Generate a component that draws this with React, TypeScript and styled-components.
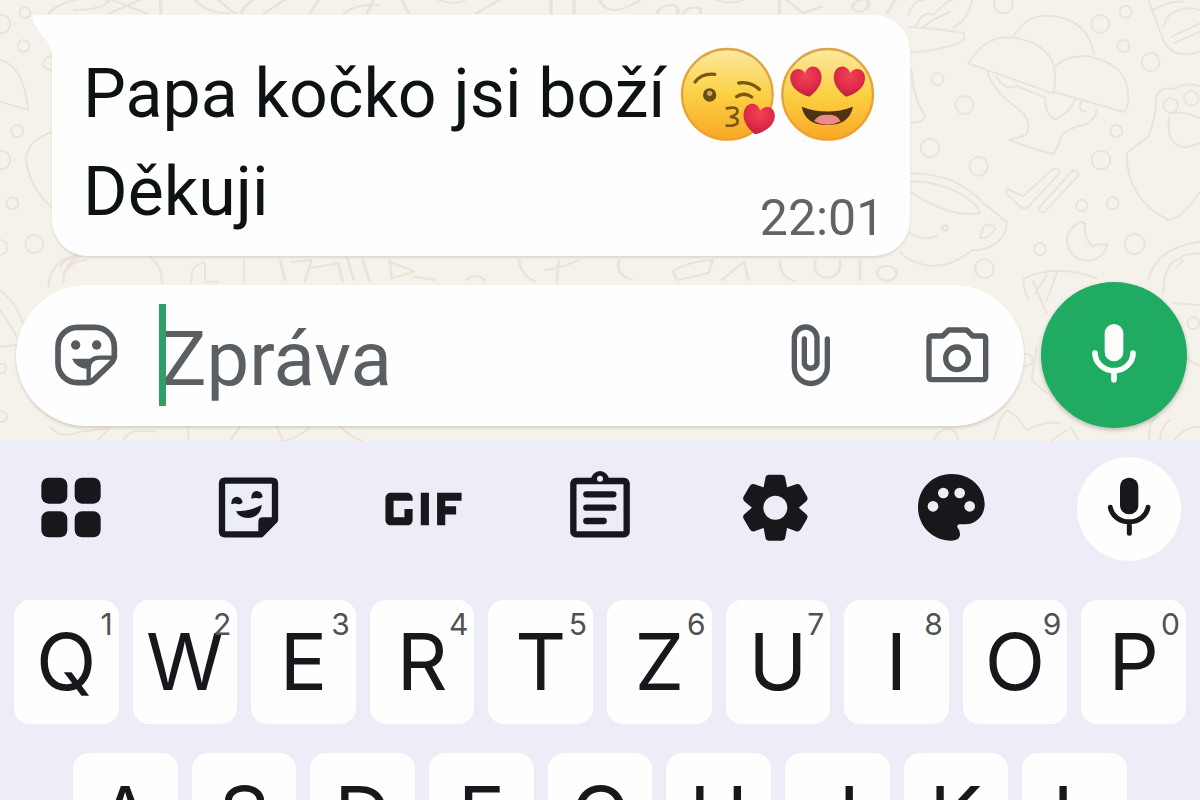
import React from "react";
import styled, { createGlobalStyle } from "styled-components";
import { MdGif } from "react-icons/md";

const GlobalStyle = createGlobalStyle`
  *, *::before, *::after { box-sizing: border-box; }
  body { margin: 0; font-family: Roboto, "Liberation Sans", sans-serif; }
  button { border: 0; padding: 0; background: none; font: inherit; color: inherit; cursor: pointer; }
  p { margin: 0; }
  svg { display: block; flex: none; }
`;

const Screen = styled.div`
  display: flex;
  flex-direction: column;
  height: 100vh;
  overflow: hidden;
  background: #ecedf7;
`;

const Chat = styled.main`
  position: relative;
  display: flex;
  flex: none;
  flex-direction: column;
  gap: 26px;
  padding: 15px 13px 13px 16px;
  background: #f5f2eb;
  overflow: hidden;
`;

const Wallpaper = styled.svg`
  position: absolute;
  inset: 0;
  width: 100%;
  height: 100%;
  fill: none;
  stroke: #ebe2d8;
  stroke-width: 6;
  stroke-linecap: round;
  stroke-linejoin: round;
`;

const Bubble = styled.article`
  position: relative;
  align-self: flex-start;
  margin-left: 36px;
  padding: 30px 26px 8px 31px;
  border-radius: 0 36px 36px 36px;
  background: #fefefe;
  box-shadow: 0 2px 2px rgba(60, 50, 40, 0.12);
  color: #0d1214;
  font-size: 68px;
  line-height: 98px;
`;

const Tail = styled.svg`
  position: absolute;
  top: 0;
  left: -20px;
  width: 22px;
  height: 38px;
  fill: #fefefe;
`;

const Line = styled.div`
  display: flex;
  align-items: center;
`;

const Emojis = styled.span`
  display: flex;
  gap: 5px;
  margin: 0 9px 0 15px;
`;

const LastLine = styled.div`
  display: flex;
  align-items: flex-end;
  justify-content: space-between;
`;

const LastText = styled.p`
  padding-bottom: 7px;
`;

const Time = styled.time`
  color: #5f6467;
  font-size: 50px;
  line-height: 60px;
`;

const Composer = styled.form`
  position: relative;
  display: flex;
  align-items: center;
  gap: 17px;
`;

const Pill = styled.div`
  display: flex;
  flex: 1;
  align-items: center;
  min-width: 0;
  height: 141px;
  padding: 0 34px 0 38px;
  border-radius: 71px;
  background: #fefefe;
  box-shadow: 0 2px 3px rgba(60, 50, 40, 0.18);
  color: #565b5f;
`;

const Caret = styled.span`
  position: relative;
  flex: none;
  width: 7px;
  height: 102px;
  margin: 0 -5px 0 41px;
  background: #2f9e67;
`;

const MessageInput = styled.input`
  flex: 1;
  min-width: 0;
  height: 120px;
  padding: 7px 0 0;
  border: 0;
  outline: 0;
  background: transparent;
  color: #0d1214;
  caret-color: transparent;
  font: 400 76px Roboto, "Liberation Sans", sans-serif;
  &::placeholder { color: #5a5f63; opacity: 1; }
`;

const Actions = styled.div`
  display: flex;
  align-items: center;
  gap: 93px;
`;

const VoiceButton = styled.button`
  display: grid;
  flex: none;
  place-items: center;
  width: 146px;
  height: 146px;
  border-radius: 50%;
  background: #1fab61;
  box-shadow: 0 2px 4px rgba(40, 60, 40, 0.3);
  color: #fdfffd;
`;

const Keyboard = styled.section`
  flex: none;
  color: #17181c;
`;

const Toolbar = styled.div`
  display: flex;
  justify-content: space-between;
  padding: 16px 19px 39px;
`;

const Tool = styled.button<{ $filled?: boolean }>`
  display: grid;
  flex: none;
  place-items: center;
  width: 104px;
  height: 104px;
  border-radius: 50%;
  background: ${(p) => (p.$filled ? "#fefefe" : "transparent")};
`;

const ToolIcon = styled.svg`
  width: 68px;
  height: 80px;
  overflow: visible;
  fill: none;
  stroke-linecap: round;
  stroke-linejoin: round;
`;

const GifIcon = styled(MdGif)`
  width: 87px;
  height: 44px;
`;

const KeyRow = styled.div<{ $inset: number }>`
  display: flex;
  gap: 14px;
  margin-bottom: 29px;
  padding: 0 ${(p) => p.$inset}px;
`;

const Key = styled.button`
  position: relative;
  flex: 1;
  height: 124px;
  padding-bottom: 2px;
  border-radius: 16px;
  background: #fefefe;
  font-family: Inter, Roboto, sans-serif;
  font-size: 79px;
  line-height: 122px;
  text-align: center;
`;

const Hint = styled.span`
  position: absolute;
  top: 8px;
  right: 6px;
  color: #505154;
  font-size: 30px;
  line-height: 32px;
`;

const topRow = ["Q", "W", "E", "R", "T", "Z", "U", "I", "O", "P"];
const homeRow = ["A", "S", "D", "F", "G", "H", "J", "K", "L"];

function Doodles() {
  return (
    <Wallpaper viewBox="0 0 1200 441" preserveAspectRatio="xMinYMin slice" aria-hidden="true">
      <g transform="translate(900 0) scale(0.33333)">
        <path d="M205 190Q255 105 335 112Q440 125 462 200Q470 240 460 280Q330 235 205 190Z" />
        <path d="M340 108Q380 45 440 47Q560 50 582 160M462 200Q500 165 560 168Q680 190 684 280Q688 320 672 336L460 275" />
        <path d="M262 215Q280 275 360 330Q400 370 378 405L328 420Q390 445 460 462Q475 440 483 410Q500 385 560 372Q590 350 590 330M290 232Q320 275 350 258L435 292Q435 345 465 358Q510 340 525 298M545 305Q530 335 560 335" />
        <path d="M320 565L345 578L370 588L455 510Q472 500 480 518L385 620Q370 632 355 615L318 580ZM418 622L515 515Q532 505 536 525L435 634Q420 644 418 622Z" />
        <path d="M540 665Q495 690 502 730Q515 785 570 782Q610 775 622 735Q600 728 578 740Q550 715 555 670Z" />
        <path d="M768 290Q785 255 825 268Q850 245 900 258M768 290Q770 350 745 410L680 460Q680 600 808 662Q860 640 900 575M808 350Q795 440 860 442L900 430M820 340Q850 330 900 355" />
        <circle cx="812" cy="317" r="22" /><circle cx="874" cy="295" r="22" />
        <path d="M745 0L790 120Q815 170 870 162L900 155M760 30Q810 0 850 5M810 45Q850 15 900 30M790 80Q800 50 810 45M820 130L900 95M815 110L900 70" />
        <path d="M30 520Q170 520 250 610L320 665Q320 730 240 750L215 750Q160 800 90 798Q30 790 0 755M30 545Q100 540 180 580Q240 620 240 640Q150 655 30 575M240 715L250 680Q270 665 285 685Q275 715 240 715ZM30 700Q70 725 110 708" />
        <circle cx="135" cy="684" r="8" />
        <path d="M30 80Q110 85 190 98Q205 125 150 138Q90 155 30 158M25 45Q40 0 70 0M50 75Q70 30 100 45Q140 0 160 0M70 80L100 60L150 35M215 0Q205 60 160 82M35 210Q40 300 75 345Q70 370 30 368" />
        <path d="M385 900Q365 850 372 835Q470 790 590 835M405 880L440 825M440 900L470 820M745 840Q765 745 900 725M790 880Q790 790 840 775L850 765L900 760M830 800L850 780" />
        <circle cx="310" cy="12" r="28" /><circle cx="601" cy="72" r="27" /><circle cx="677" cy="35" r="18" />
        <circle cx="670" cy="138" r="18" /><circle cx="752" cy="186" r="27" /><circle cx="113" cy="238" r="18" />
        <circle cx="193" cy="315" r="27" /><circle cx="90" cy="444" r="28" /><circle cx="236" cy="499" r="28" />
        <circle cx="649" cy="393" r="18" /><circle cx="603" cy="480" r="28" /><circle cx="545" cy="617" r="17" />
        <circle cx="638" cy="610" r="18" /><circle cx="704" cy="732" r="30" /><circle cx="420" cy="747" r="18" />
        <circle cx="253" cy="806" r="28" />
      </g>
      <g transform="scale(0.33333)">
        <path d="M0 180Q70 195 85 330L0 305M160 395Q80 420 78 480Q90 570 160 625M160 165Q125 175 130 200L160 215M180 800Q190 775 240 770M200 810Q220 780 260 780" />
        <circle cx="75" cy="38" r="16" /><circle cx="3" cy="72" r="28" /><circle cx="71" cy="138" r="18" />
        <circle cx="52" cy="393" r="18" /><circle cx="3" cy="480" r="28" /><circle cx="37" cy="610" r="18" />
        <circle cx="103" cy="732" r="27" /><circle cx="0" cy="742" r="22" />
      </g>
      <g transform="translate(0 250) scale(0.33333)">
        <path d="M145 110Q150 30 230 15M190 95Q190 40 240 20M450 20Q490 50 485 100M575 95Q570 40 615 40V95H650M732 30V95M0 120Q50 160 70 220M0 180Q30 220 50 260M0 290L50 285" />
        <path d="M150 530Q180 570 240 545L330 535Q300 560 290 575M370 575Q380 530 470 545M565 530V575M690 575L720 530M830 530L850 575Q900 560 930 530M1020 530Q1050 560 1090 575" />
        <circle cx="5" cy="355" r="14" /><circle cx="5" cy="500" r="16" />
      </g>
      <g transform="translate(200 245) scale(0.446 0.3333)">
        <path d="M180 45L190 105M205 50L250 45L235 110M245 70L310 55L320 110M330 40L345 105M365 45L380 108M425 45L430 100L480 80L425 50M480 95L525 105M598 105Q620 80 640 108M715 45Q720 90 750 110M775 75Q820 65 850 45M805 45L800 110M940 45Q930 90 970 105M1060 80Q1090 50 1150 45L1140 85L1070 105ZM1170 105L1220 50L1230 105M1300 45Q1300 100 1335 108M1380 45Q1370 95 1410 98Q1440 90 1435 45M1480 45V105" />
        <circle cx="1540" cy="85" r="22" />
      </g>
      <g transform="scale(0.574 0.3333)">
        <path d="M85 40Q120 -20 190 0Q180 30 130 30M190 40L250 -5M195 0L255 40M280 0V42M340 0Q360 40 400 40M380 0Q400 30 410 40M440 0Q420 30 420 40M500 -5L460 40M555 0L540 40M600 40Q620 10 660 15M650 0L640 40M700 0L712 40M765 0Q790 18 810 0M870 0L830 40M960 0V42M1000 0V42M1045 0Q1060 60 1115 0M1145 40Q1150 15 1170 15Q1185 20 1180 40M1190 40Q1200 15 1220 25V40M1250 0Q1270 15 1295 0M1358 0V40M1370 0L1400 40L1430 20M1485 20Q1490 -5 1510 0Q1520 20 1500 35Q1485 35 1485 20ZM1560 0L1545 40" />
      </g>
      <g transform="translate(760 270) scale(0.33333)">
        <path d="M520 515Q530 480 570 475Q600 490 590 515M700 515L720 450L740 420L770 440L800 480Q860 450 900 460M870 515L920 480M960 515L930 470M1170 515Q1160 460 1190 440M1200 515Q1200 470 1230 450M1240 515Q1270 470 1320 470M820 35L860 130M1240 100L1320 105M830 230L815 330L860 370M1270 250Q1290 280 1320 285" />
        <circle cx="1300" cy="160" r="18" /><circle cx="800" cy="270" r="18" />
      </g>
    </Wallpaper>
  );
}

function Heart({ x, y, size, turn }: { x: number; y: number; size: number; turn: number }) {
  return (
    <path
      transform={`translate(${x} ${y}) rotate(${turn}) scale(${size})`}
      d="M0 46C-16 38-47 18-47-12C-47-46-12-52 0-26C12-52 47-46 47-12C47 18 16 38 0 46Z"
      fill="url(#heart)"
    />
  );
}

function EmojiDefs() {
  return (
    <defs>
      <linearGradient id="face" x1="0" y1="0" x2="0" y2="1">
        <stop offset="0" stopColor="#fdeaa0" />
        <stop offset="0.5" stopColor="#fbd044" />
        <stop offset="1" stopColor="#f9a825" />
      </linearGradient>
      <linearGradient id="rim" x1="0" y1="0" x2="0" y2="1">
        <stop offset="0" stopColor="#dba548" />
        <stop offset="1" stopColor="#f3a02c" />
      </linearGradient>
      <radialGradient id="heart" cx="0.5" cy="0.3" r="0.7">
        <stop offset="0" stopColor="#ef4455" />
        <stop offset="0.6" stopColor="#e02a48" />
        <stop offset="1" stopColor="#b9203c" />
      </radialGradient>
    </defs>
  );
}

function KissEmoji() {
  return (
    <svg width="95" height="95" viewBox="60 50 285 285" role="img" aria-label="Kiss">
      <EmojiDefs />
      <circle cx="202" cy="192" r="136" fill="url(#face)" stroke="url(#rim)" strokeWidth="7" />
      <g fill="none" stroke="#7a5712" strokeWidth="10" strokeLinecap="round">
        <path d="M105 155Q125 128 164 132M236 158Q270 152 298 177M230 199Q252 184 275 200" />
        <path d="M200 234Q236 226 232 246Q228 256 210 260Q238 262 232 278Q226 288 200 286" strokeWidth="8" />
      </g>
      <circle cx="149" cy="194" r="20" fill="#6b4c12" />
      <circle cx="149" cy="189" r="8" fill="#c9a860" />
      <Heart x={295} y={267} size={1} turn={12} />
    </svg>
  );
}

function HeartEyesEmoji() {
  return (
    <svg width="95" height="95" viewBox="360 50 285 285" role="img" aria-label="Heart eyes">
      <circle cx="503" cy="192" r="136" fill="url(#face)" stroke="url(#rim)" strokeWidth="7" />
      <path d="M425 229Q502 258 579 229Q568 284 502 284Q436 284 425 229Z" fill="#51320f" />
      <path d="M462 273Q475 250 502 254Q530 250 542 273Q502 294 462 273Z" fill="#ee8a8c" />
      <Heart x={440} y={154} size={1} turn={-10} />
      <Heart x={566} y={154} size={1} turn={10} />
    </svg>
  );
}

function StickerFace() {
  return (
    <svg width="64" height="64" viewBox="162 219 192 192" fill="none" stroke="currentColor" strokeWidth="17" strokeLinejoin="round">
      <path d="M232 232H285A58 58 0 0 1 343 290V322Q340 334 328 345L286 385Q274 398 260 398H232A58 58 0 0 1 174 340V290A58 58 0 0 1 232 232Z" />
      <path d="M343 323H300Q266 323 266 357V396" strokeWidth="13" />
      <path d="M216 326H292Q268 336 262 357Q228 354 216 326Z" fill="currentColor" stroke="none" />
      <circle cx="227" cy="285" r="14" fill="currentColor" stroke="none" />
      <circle cx="290" cy="285" r="14" fill="currentColor" stroke="none" />
    </svg>
  );
}

function PaperClip() {
  return (
    <svg width="42" height="66" viewBox="91 155 126 198" fill="none" stroke="currentColor" strokeWidth="16" strokeLinecap="round">
      <path d="M203 206V290A49 49 0 0 1 104 290V204A34 34 0 0 1 172 204V280A20 20 0 0 1 134 280V206" />
    </svg>
  );
}

function Camera() {
  return (
    <svg width="65" height="60" viewBox="495 165 195 180" fill="none" stroke="currentColor" strokeWidth="16" strokeLinejoin="round">
      <path d="M516 198H548L566 180H620L638 198H668Q677 198 677 207V320Q677 329 668 329H516Q507 329 507 320V207Q507 198 516 198Z" />
      <circle cx="591" cy="265" r="34" />
    </svg>
  );
}

function SendMic() {
  return (
    <svg width="48" height="64" viewBox="990 160 144 192" fill="none" stroke="currentColor" strokeWidth="17" strokeLinecap="round">
      <rect x="1034" y="163" width="56" height="112" rx="28" fill="currentColor" stroke="none" />
      <path d="M1005 250A57 53 0 0 0 1119 250M1062 304V330" />
    </svg>
  );
}

export default function App() {
  return (
    <Screen>
      <GlobalStyle />
      <Chat>
        <Doodles />
        <Bubble>
          <Tail viewBox="0 0 22 38" aria-hidden="true">
            <path d="M4 0H22V38H20Q19 30 12 23L2 8Q-2 0 4 0Z" />
          </Tail>
          <Line>
            <p>Papa kočko jsi boží</p>
            <Emojis>
              <KissEmoji />
              <HeartEyesEmoji />
            </Emojis>
          </Line>
          <LastLine>
            <LastText>Děkuji</LastText>
            <Time>22:01</Time>
          </LastLine>
        </Bubble>
        <Composer onSubmit={(e) => e.preventDefault()}>
          <Pill>
            <button type="button" aria-label="Stickers"><StickerFace /></button>
            <Caret />
            <MessageInput placeholder="Zpráva" aria-label="Zpráva" />
            <Actions>
              <button type="button" aria-label="Attach"><PaperClip /></button>
              <button type="button" aria-label="Camera"><Camera /></button>
            </Actions>
          </Pill>
          <VoiceButton type="button" aria-label="Voice message"><SendMic /></VoiceButton>
        </Composer>
      </Chat>
      <Keyboard>
        <Toolbar>
          <Tool aria-label="Apps">
            <ToolIcon viewBox="111 57 204 240">
              <g fill="currentColor">
                <rect x="124" y="83" width="78" height="78" rx="22" />
                <rect x="224" y="83" width="78" height="78" rx="22" />
                <rect x="124" y="184" width="78" height="78" rx="22" />
                <rect x="224" y="184" width="78" height="78" rx="22" />
              </g>
            </ToolIcon>
          </Tool>
          <Tool aria-label="Stickers">
            <ToolIcon viewBox="640 57 204 240">
              <path d="M676 92H817Q826 92 826 101V210L784 253H676Q667 253 667 244V101Q667 92 676 92Z" stroke="currentColor" strokeWidth="19" />
              <g fill="currentColor">
                <path d="M776 255V215Q776 202 790 202H828V212L784 255Z" />
                <path d="M695 163Q694 142 711 140Q726 141 729 157Q722 166 711 161Q702 160 695 163ZM755 146Q754 125 771 123Q786 124 789 140Q782 148 771 144Q762 143 755 146Z" />
                <path d="M709 184Q752 184 786 164Q784 200 747 204Q718 205 709 184Z" />
              </g>
            </ToolIcon>
          </Tool>
          <Tool aria-label="GIF">
            <GifIcon viewBox="4 8 16 8" />
          </Tool>
          <Tool aria-label="Clipboard">
            <ToolIcon viewBox="618 57 204 240" stroke="currentColor" strokeWidth="19">
              <rect x="640" y="93" width="160" height="160" rx="8" />
              <path d="M697 90A23 23 0 0 1 743 90" fill="currentColor" strokeWidth="8" />
              <circle cx="720" cy="86" r="9" fill="#ecedf7" stroke="none" />
              <path d="M679 133H760M679 173H760M679 213H731" />
            </ToolIcon>
          </Tool>
          <Tool aria-label="Settings">
            <ToolIcon viewBox="127 57 204 240">
              <g transform="translate(227 173)" fill="currentColor" stroke="currentColor" strokeWidth="24">
                <circle r="57" />
                {[0, 60, 120, 180, 240, 300].map((a) => (
                  <path key={a} transform={`rotate(${a})`} d="M-24 -55L-18 -87H18L24 -55Z" />
                ))}
                <circle r="36" fill="#ecedf7" stroke="none" />
              </g>
            </ToolIcon>
          </Tool>
          <Tool aria-label="Themes">
            <ToolIcon viewBox="656 57 204 240">
              <path d="M753 72C810 72 853 112 853 162C853 198 826 223 795 223H779Q766 224 773 235Q780 244 779 256Q776 272 753 272C697 272 653 228 653 172C653 116 697 72 753 72Z" fill="currentColor" />
              <g fill="#ecedf7">
                <circle cx="698" cy="169" r="16" />
                <circle cx="729" cy="129" r="16" />
                <circle cx="778" cy="129" r="16" />
                <circle cx="808" cy="169" r="16" />
              </g>
            </ToolIcon>
          </Tool>
          <Tool $filled aria-label="Voice typing">
            <ToolIcon viewBox="1185 57 204 240">
              <rect x="1260" y="83" width="55" height="110" rx="27" fill="currentColor" />
              <path d="M1231 172A57 50 0 0 0 1344 172M1288 224V250" stroke="currentColor" strokeWidth="15" />
            </ToolIcon>
          </Tool>
        </Toolbar>
        <KeyRow $inset={14}>
          {topRow.map((letter, i) => (
            <Key key={letter}>
              {letter}
              <Hint>{(i + 1) % 10}</Hint>
            </Key>
          ))}
        </KeyRow>
        <KeyRow $inset={73}>
          {homeRow.map((letter) => (
            <Key key={letter}>{letter}</Key>
          ))}
        </KeyRow>
      </Keyboard>
    </Screen>
  );
}
